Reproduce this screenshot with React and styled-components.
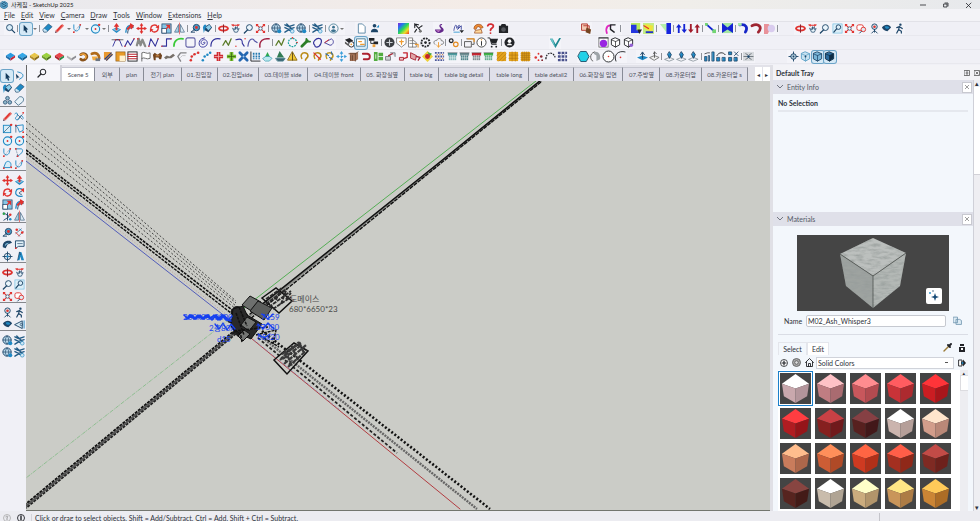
import { useState } from "react";
import styled, { createGlobalStyle } from "styled-components";

const navy = "#1d4568";
const blue = "#2089c4";
const red = "#e0322f";
const ink = "#222428";

// stroke helper, most tool glyphs are plain outlines
const S = ({ d, c = navy, w = 1, f = "none", dash }) => (
  <path d={d} stroke={c} strokeWidth={w} fill={f} strokeDasharray={dash} strokeLinecap={dash ? "butt" : "round"} strokeLinejoin="round" />
);
const F = ({ d, c = navy }) => <path d={d} fill={c} />;
const Dot = ({ x, y, r = 1, c = red }) => <circle cx={x} cy={y} r={r} fill={c} />;

const gem = (top, left, right) => (
  <>
    <F d="M6 2L11 5L6 8L1 5Z" c={top} />
    <F d="M1 5L6 8V10.5L1 7Z" c={left} />
    <F d="M11 5L6 8V10.5L11 7Z" c={right} />
  </>
);
const curve = (d, c = "#33339b") => (
  <>
    <S d={d} c={c} w={1.2} />
    <Dot x={1} y={10} r={0.8} />
    <Dot x={11} y={2} r={0.8} />
  </>
);
const hook = (c, extra) => (
  <>
    <S d="M3 8C1 5 3 2 6 2C10 2 11 6 8 8L7 10" c={c} w={1.7} />
    {extra}
  </>
);
const shelf = (top, body) => (
  <>
    <rect x="1" y="2" width="10" height="3" fill={top} />
    <rect x="2" y="5" width="8" height="5" fill={body} />
    <S d="M4 5V10M6 5V10M8 5V10M2 7.5H10" c="#fff" w={0.5} />
    <S d="M1 2H11" c={ink} w={0.5} />
  </>
);
const tiles = (lines) => (
  <>
    <rect x="1" y="1" width="10" height="10" fill="#e3a21c" />
    <S d={lines} c="#a8700f" w={0.6} />
  </>
);
const globe = (
  <>
    <circle cx="5.5" cy="5.5" r="4.5" fill="#b9d7ea" stroke={navy} />
    <S d="M1 5.5H10M5.5 1C3 4 3 7 5.5 10C8 7 8 4 5.5 1" w={0.7} />
    <circle cx="9" cy="9" r="2.2" fill={blue} />
  </>
);
const house = (
  <>
    <S d="M1 2L5 4L11 2M1 5L5 7L11 5M1 10L5 7.5L8 9M3 1L9 7" c="#245c86" w={1.5} />
    <circle cx="9" cy="9" r="2" fill="#cfe6f4" stroke={blue} strokeWidth="0.7" />
  </>
);
const cubeLine = (c, fill) => (
  <>
    <S d="M6 1L10.5 3V8.5L6 11L1.5 8.5V3Z" c={c} f={fill} />
    <S d="M1.5 3L6 5L10.5 3M6 5V11" c={c} w={0.8} />
  </>
);
const pair = (l, r, up) => (
  <>
    <F c={l} d={up ? "M3 1L6 5H4V11H2V5H0Z" : "M2 11L-1 7H1V1H3V7H5Z"} />
    <F c={r} d={up ? "M9 11L6 7H8V1H10V7H12Z" : "M9 1L12 5H10V11H8V5H6Z"} />
  </>
);

const glyphs = {
  zoom: <><circle cx="7" cy="5" r="3.2" fill="#eaf4fb" stroke={navy} /><S d="M5 7.5L1.5 11" w={1.5} /></>,
  zoomGlass: <><circle cx="5" cy="5" r="3.3" fill="#d8ecf8" stroke={navy} /><S d="M7.5 7.5L10.5 10.5" w={1.4} /></>,
  zoomWindow: <><rect x="1" y="1" width="10" height="10" fill="#dceef8" stroke="#70bde2" strokeWidth="0.7" /><circle cx="7" cy="4.5" r="2.5" fill="none" stroke={navy} /><S d="M5 6.5L2 10" w={1.3} /></>,
  zoomExtents: <><S d="M2 2L10 10M10 2L2 10" c={red} w={1.2} /><F c={red} d="M1 1H4L1 4ZM11 1V4L8 1ZM1 11V8L4 11ZM11 11H8L11 8Z" /><circle cx="6" cy="6" r="1.8" fill="#fff" stroke={navy} strokeWidth="0.8" /></>,
  select: <F c="#123a5c" d="M4 2L9 7H7L8 10L6.5 10.5L5.5 7.8L4 9Z" />,
  lasso: <><S d="M4 1C9 2 11 4 9 7L6 9" c={blue} /><F c="#123a5c" d="M2 3L6 7H4L3 9Z" /></>,
  eraser: <><F c={blue} d="M7 1L11 4L6 9L2 6Z" /><F c="#c9e6f5" d="M2 6L6 9L5 10H2L1 8Z" /><S d="M2 6L7 1L11 4L5 10H2L1 8Z" w={0.7} /></>,
  pencil: <><F c="#e86b66" d="M9 1L11 3L4 10L1 11L2 8Z" /><F c={red} d="M8 2L9 3L4 9L3 8Z" /><F d="M1 11L2 9L3 10Z" /></>,
  freehand: <><S d="M1 3C4 0 5 5 2 7C0 10 6 11 6 7C7 4 10 5 10 8" c={blue} /><Dot x={10} y={2} /><S d="M4 4L9 9M9 4L4 9" w={0.7} /></>,
  arc: <><S d="M2 2V6C3 10 7 9 8 6L9 2" c={blue} /><S d="M2 10L9 2" w={0.6} dash="1 1" /><Dot x={2} y={10} /><Dot x={9} y={2} /></>,
  arcTwo: <><S d="M2 2H8C11 3 9 8 3 10" c={blue} /><S d="M2 2L4 9" w={0.7} dash="1 1" /><Dot x={2} y={2} /><Dot x={4} y={10} /></>,
  pie: <><S d="M2 9L4 4C7 0 12 5 9 9Z" c={blue} f="#d7edf8" /><Dot x={2} y={10} /><Dot x={10} y={9} /></>,
  rectangle: <><rect x="1.5" y="2.5" width="8" height="8" fill="#d7edf8" stroke={blue} /><S d="M2 10L9 3" w={0.7} /><Dot x={10} y={2} r={1.3} /></>,
  rotRect: <><S d="M2 3L10 2V8L6 10L4 5Z" c={blue} /><Dot x={2} y={2.5} /><S d="M2 3V10" w={0.7} /><Dot x={10} y={10} /></>,
  circle: <><circle cx="6" cy="6.5" r="4.5" fill="#e6f4fb" stroke={blue} strokeWidth="1.2" /><Dot x={6} y={6.5} /><Dot x={10} y={2} r={1.3} /></>,
  pushpull: <><F c={blue} d="M1 7L6 5L11 7L6 11Z" /><F c="#8bc9e8" d="M2 7L6 6L10 7L6 9Z" /><F c={red} d="M6 0L9 4H7V8H5V4H3Z" /></>,
  follow: <><S d="M2 10C2 4 5 2 10 3" c={blue} w={1.5} /><S d="M4 11C4 7 6 5 10 5" /><F c={red} d="M7 0L11 3L8 7L7 5L4 8L3 6L6 3Z" /></>,
  move: <><S d="M6 2V10M2 6H10" c={red} w={1.5} /><F c={red} d="M6 0L8 3H4ZM6 12L4 9H8ZM0 6L3 4V8ZM12 6L9 8V4Z" /></>,
  rotate: <><S d="M2 6C2 2 8 1 9 4M10 6C10 10 4 11 3 8" c={red} w={1.4} /><F c={red} d="M11 2V6L7 5ZM1 10V6L5 7Z" /></>,
  scale: <><rect x="1" y="1" width="10" height="10" fill="#86c5e5" stroke={navy} strokeWidth="0.8" /><rect x="1" y="6" width="5" height="5" fill="#fff" stroke={navy} strokeWidth="0.8" /><F c={red} d="M5 2H10V7L8 5L6 7L5 6L7 4Z" /></>,
  flip: <><F c="#a5cfe6" d="M5 2V10H1Z" /><S d="M5 2V10H1Z" w={0.6} /><S d="M7 2V10H11Z" c={navy} f="#dbeaf4" w={0.6} /><S d="M6 0V12" c={red} w={0.7} /></>,
  offset: <><S d="M9 10C4 11 1 8 2 5C3 1 7 1 10 3" c={blue} w={1.3} /><S d="M8 8C5 8 5 5 8 5" /><F c={red} d="M11 1V6L7 3Z" /></>,
  tape: <><circle cx="7" cy="5" r="3.5" fill="#4a9cc8" stroke={navy} /><Dot x={7} y={5} r={1.6} /><S d="M5 7L1 10H5" /></>,
  dimension: <><S d="M2 7L8 2M5 10L10 5" w={0.7} /><Dot x={3} y={3} r={1.4} /><Dot x={9} y={6} r={1.4} /><S d="M2 6L6 10" c={red} /><S d="M6 2L8 4" c={blue} /></>,
  protractor: <><F d="M1 9C0 4 4 1 9 2L11 4L6 6L4 10Z" /><F c="#8ac5e3" d="M3 8C3 5 5 4 8 4L5 6Z" /></>,
  text: <><S d="M2 2H11V8H5L2 10Z" f="#e4f2fa" /><S d="M4 5H9" w={0.7} /><Dot x={2} y={10} /></>,
  axes: <><circle cx="6" cy="6" r="3.5" fill="none" stroke={navy} /><S d="M6 1V11M1 6H11" /><Dot x={6} y={6} c={blue} r={1.3} /></>,
  text3d: <><F c={blue} d="M4 10L6 1H8L11 10H8L7 6L6 10Z" /><S d="M4 10L6 1L7 4" w={0.8} /></>,
  paint: <><F c={navy} d="M3 4L8 1L11 5L7 10L3 8Z" /><F c="#8bcdea" d="M4 4.5L8 2L10 5L7 8Z" /><F c={blue} d="M1 5C2 0 6 1 4 5L2 11Z" /></>,
  softEraser: <S d="M1 7L6 2C10 1 12 5 9 8L5 11Z" c="#3c6685" f="#e7f2f8" w={0.9} />,
  blobs: <><circle cx="6" cy="3.5" r="2" fill="#8fb6cb" stroke={navy} strokeWidth="0.8" /><circle cx="3.5" cy="8" r="2" fill="#8fb6cb" stroke={navy} strokeWidth="0.8" /><circle cx="8.5" cy="8" r="2" fill="#8fb6cb" stroke={navy} strokeWidth="0.8" /></>,
  outliner: <><S d="M2 2L8 6L2 10M6 2V10" c={navy} /><Dot x={2} y={3} c="#2ba24a" r={1.4} /><Dot x={9} y={4} r={1.4} /><Dot x={9} y={9} c={blue} r={1.4} /></>,
  orbit: <><S d="M1 6C2 3 10 3 11 6C10 9 2 9 1 6" c={red} w={1.8} /><S d="M6 2V10" c="#8d2530" w={1.1} /></>,
  pan: <><F c={red} d="M1 2L4 1V4ZM11 2L8 1V4ZM4 2H8V3H4Z" /><S d="M3 6L5 10H8L10 6L8 7V4L6 7V4L5 7Z" f="#e7f3fa" w={0.8} /></>,
  previous: <><rect x="1" y="2" width="7" height="6" rx="2" fill="#fff" stroke={red} /><circle cx="8" cy="7" r="2.5" fill="#e0e9f0" stroke={red} /><S d="M6 9L4 11" w={1} /></>,
  camera: <><circle cx="6" cy="4" r="3" fill="#d9e5ed" stroke={navy} /><Dot x={6} y={4} r={1.4} /><S d="M6 7V10M3 11L6 8L9 11" /></>,
  walk: <><Dot x={7} y={1.8} r={1.3} c={navy} /><S d="M6 4L5 7L8 9V11M5 7L3 11M3 5L6 4L9 6" w={1.3} /></>,
  look: <><F d="M1 5C4 1 9 1 11 5L7 9C4 9 2 7 1 5Z" /><F c={blue} d="M4 4C6 3 9 4 9 5C8 7 5 7 4 4Z" /></>,
  section: <><S d="M1 6L9 2V10Z" f="#d8ebf5" /><S d="M11 2V10" c={blue} /><circle cx="8" cy="6" r="1.3" fill="none" stroke={navy} strokeWidth="0.7" /></>,
  globe, house,
  userRing: <><circle cx="6" cy="6" r="5" fill="none" stroke="#53879d" /><Dot x={6} y={4.5} r={1.5} c="#39708e" /><F c="#39708e" d="M3 9C4 6 8 6 9 9L6 10Z" /></>,
  doc: <S d="M3 1H7L10 4V11H3Z" c="#5a86a4" f="#fff" />,
  person: <><Dot x={6} y={3} r={2} c={navy} /><F d="M2 10C2 5 10 5 10 10Z" /><F c={blue} d="M8 5L11 2V5Z" /></>,
  spectrum: <><defs><linearGradient id="hue" x1="0" y1="0" x2="1" y2="1"><stop offset="0" stopColor="#8a25d8" /><stop offset="0.25" stopColor="#2673f2" /><stop offset="0.5" stopColor="#28d95c" /><stop offset="0.75" stopColor="#ecdf28" /><stop offset="1" stopColor="#f03424" /></linearGradient></defs><rect width="12" height="12" fill="url(#hue)" /></>,
  wand: <><S d="M3 1L10 9M3 1V5M3 1L7 2M8 5L11 3M5 7L3 10" c={ink} w={1.2} /><Dot x={9} y={9} r={1.5} c="#777" /></>,
  swan: <><F c="#64298c" d="M1 7H8L6 4C5 1 9 0 9 2L7 3L10 6C12 9 8 11 5 11C3 11 1 9 1 7Z" /><F c="#c278c7" d="M2 8H7L5 10Z" /></>,
  scribble: <><S d="M1 8C2 1 4 1 4 5C3 8 7 0 7 3L5 7L9 3V7" c="#3b459c" /><S d="M1 10H7" c="#3a9ad1" /><F c={ink} d="M7 8H12L9.5 11Z" /></>,
  phone: <><S d="M1 6C1 0 10 0 11 5L8 6L7 4H5L3 7Z" c="#9c4f21" f="#ee8b32" w={0.8} /><S d="M3 8L9 7L10 11H2Z" c="#9c4f21" f="#ffd89b" w={0.8} /></>,
  question: <><S d="M3 3C4 0 10 1 9 4C8 6 6 6 6 8" c="#d42c32" w={2} /><Dot x={6} y={11} c="#d42c32" /></>,
  photo: <><F c={ink} d="M1 3H3L4 1H8L9 3H11V11H1Z" /><circle cx="6" cy="7" r="2.5" fill="#55585e" /></>,
  copies: <><S d="M1 1H7V8H1ZM3 3H9V10" c="#b4382e" f="#f2cbb5" /><F c="#754522" d="M6 5L11 7L10 12L5 10Z" /></>,
  magenta: <><S d="M2 11C0 4 4 2 6 3" c="#df28c0" w={2} /><S d="M6 2H11M6 2V7L10 10" c={ink} w={1.5} /></>,
  fieldA: <><rect width="10" height="11" fill="#b8ea60" /><F c="#2536df" d="M0 2H6V8H10V11H0Z" /><F c={ink} d="M7 7H12L9 12Z" /></>,
  fieldB: <><rect width="12" height="12" fill="#c4ec83" /><F c="#f0e33a" d="M3 1L11 3L10 10L1 6Z" /><S d="M1 3L6 6" c={red} w={1.3} /><F c="#2432c9" d="M3 9H11V11H3Z" /></>,
  fieldC: <><F c="#b5efaa" d="M0 1H7V10Z" /><rect x="7" width="5" height="12" fill="#1625de" /></>,
  pairBlue: pair("#1424d4", "#1424d4", true),
  pairRed: pair("#a21c2c", "#a21c2c", false),
  diagonal: <><S d="M1 1L10 9" c="#1424d4" w={2} /><rect x="8" y="7" width="4" height="4" fill="#73d673" /><rect width="3" height="3" fill="#73d673" /></>,
  bow: <><rect width="12" height="11" fill="#a4e6a4" /><F c="#1424d4" d="M0 0L6 5L12 0V11L6 7L0 11Z" /></>,
  bendBlue: <><S d="M2 2C9 1 11 5 8 10" c="#1626c7" w={3} /><rect width="4" height="3" fill="#a6eba8" /></>,
  bendRed: <S d="M1 3C8 0 13 4 8 10" c="#9e2431" w={3} />,
  pinkBall: <><F c="#e9929a" d="M0 1H5L8 4L4 12H0Z" /><circle cx="8" cy="6" r="4" fill="#d9ccee" /></>,
  bez: <><S d="M1 10L4 3H8L11 10" c="#33339b" /><S d="M0 3H12" c={ink} w={0.7} /><Dot x={4} y={3} r={0.9} /><Dot x={8} y={3} r={0.9} /></>,
  zig: curve("M1 10L4 4L7 9L11 2"),
  zigGrey: <><S d="M1 9L3 2L5 9L7 3L10 10" c="#888b88" w={2.5} /><Dot x={2} y={2} /></>,
  ess: curve("M1 10L3 2L8 10L11 2"),
  steps: curve("M1 10H6V2H11"),
  greenArc: <S d="M1 10C1 4 5 1 11 2" c="#38c935" w={1.8} />,
  rrect: <rect x="1" y="1" width="10" height="10" rx="2" fill="none" stroke="#6260a6" strokeWidth="1.2" />,
  spiral: <S d="M6 6C7 4 9 7 6 8C3 9 2 4 6 3C11 2 12 10 6 11C0 12 0 4 4 2L7 1" c="#33339b" />,
  quarter: <S d="M1 10C1 3 6 1 11 2" c="#33339b" w={1.3} />,
  olive: <S d="M1 9L4 4L7 9L10 2" c="#5a7b28" w={1.4} />,
  drop: curve("M1 3C8 1 8 4 8 7L10 10"),
  hump: <S d="M1 10C2 1 7 1 8 4L11 6" c="#5354a5" w={1.3} />,
  redArc: <S d="M1 11C0 4 5 1 11 2" c="#a02242" w={1.6} />,
  ring: <><circle cx="6" cy="6" r="4.5" fill="none" stroke="#1aa39f" strokeWidth="1.3" strokeDasharray="2 1" /><Dot x={6} y={1} r={0.9} /><Dot x={11} y={6} r={0.9} /></>,
  wrench: <><S d="M2 10L8 4" c="#2b7d27" w={3} /><S d="M7 2V5H11" c="#2b7d27" w={2} /></>,
  oval: <S d="M3 9C-1 6 5 0 9 2C12 4 9 11 5 11C4 11 3 10 3 9Z" c="#33339b" w={1.3} />,
  kite: <><S d="M1 6L8 2C12 4 10 9 7 9Z" c="#44409b" /><S d="M1 6L5 3" c={red} /></>,
  boxes: <><F c={ink} d="M1 3L6 1L10 4L6 7Z" /><F c="#555" d="M1 5L5 8V10L1 7Z" /><circle cx="8" cy="8" r="3" fill="#fff" stroke={ink} /><Dot x={8} y={8} c="#f0a13b" /></>,
  frame: <><S d="M1 2H10V10H1Z" c="#4d7c92" f="#fff" /><S d="M3 5H6M5 8H9" c="#ef9c32" w={1.3} /></>,
  flow: <><F c={ink} d="M1 1H7V4H1ZM6 5H11V8H6Z" /><F c="#f0a13b" d="M5 8H8V11H5Z" /><S d="M3 4V7H6" c={ink} /></>,
  plusDisc: <><circle cx="6" cy="6" r="5.5" fill="#3b3e43" /><S d="M3 6H9M6 3V9" c="#cfd3d8" w={1.2} /></>,
  shield: <><S d="M1 1H11V7L6 11L1 7Z" c="#666" f="#fff" w={0.8} /><S d="M6 3V8M4 5H8" c="#ef9c32" w={1.3} /></>,
  layers: <><S d="M1 1H5V11H1ZM5 3L9 6V11H5M2 4H5M2 7H9" c="#666" f="#fff" w={0.8} /><S d="M8 8H11V11" c="#ef9c32" w={1.3} /></>,
  blackGear: <><circle cx="6" cy="6" r="4.5" fill="none" stroke={ink} strokeWidth="2" strokeDasharray="2 1" /><circle cx="6" cy="6" r="1.5" fill={ink} /></>,
  cloud: <><S d="M2 8C-1 5 3 3 4 4C5 0 10 2 9 4C13 4 12 9 9 8" c="#777" /><S d="M6 6V11M4 9L6 11L8 9" c="#ef9c32" /></>,
  gears: <><circle cx="3.5" cy="4" r="2" fill="none" stroke={ink} strokeWidth="1.4" /><circle cx="8.5" cy="8" r="2.5" fill="none" stroke="#e48c22" strokeWidth="1.3" /></>,
  folder: <><S d="M3 2H11V8H9M1 5H8V11H1Z" c="#444" w={0.9} /><S d="M4 2H11V5" c="#ef9c32" w={1.4} /></>,
  info: <><circle cx="6" cy="6" r="5" fill="#fff" stroke="#444" /><S d="M6 5V9" c={ink} /><Dot x={6} y={3} r={0.7} c="#ef9c32" /></>,
  cart: <><F c={ink} d="M2 2H11L9 7H4Z" /><S d="M0 1H2L4 8H9" c={ink} /><Dot x={4} y={10.5} c={ink} /><Dot x={9} y={10.5} c={ink} /></>,
  account: <><circle cx="6" cy="6" r="5.5" fill={ink} /><Dot x={6} y={4.5} r={2} c="#fff" /><F c="#fff" d="M3 9C4 6.5 8 6.5 9 9Z" /></>,
  check: <><F c="#1e8790" d="M0 2L3 2L6 8L10 1H12L6 12Z" /><F c="#69c3c8" d="M0 2L3 2L6 12Z" /></>,
  purpleBall: <><rect x="1" y="1" width="10" height="10" fill="#fff" stroke="#444" strokeWidth="0.7" /><circle cx="6" cy="7" r="4" fill="#9926e2" /><S d="M1 1H11" c={ink} /></>,
  cubeInk: cubeLine(ink, "#fff"),
  cubeInk2: <>{cubeLine(ink, "#fff")}<Dot x={9} y={9} r={2} c="#9360d3" /></>,
  gemMix: gem("#2b9be0", "#1b6cab", "#c92434"),
  gemBlue: gem("#35a7e6", "#1976ae", "#135b8b"),
  gemYellow: gem("#e8c64a", "#b58e24", "#8b6c18"),
  gemGreen: gem("#9cd23f", "#6d9b26", "#4e761a"),
  gemRed: gem("#e9454a", "#b01f2b", "#2a8a48"),
  gemWhite: gem("#f3f3f3", "#b5b5b8", "#8c8c90"),
  swirl: <><S d="M3 4C7 1 11 5 9 8C7 11 4 10 3 9" c="#8a541c" w={3} /><S d="M3 4C7 2 10 5 8 8" c="#efa23a" w={1.6} /></>,
  swirlBox: <><S d="M2 3C7 1 10 4 10 8" c="#b06a1b" w={3} /><F c="#f2ac43" d="M2 6H8V10H3Z" /><F c="#6c7582" d="M6 8H11V11H6Z" /></>,
  swirlPen: <><F c="#e9982f" d="M1 1H8L11 4L4 11L1 8Z" /><S d="M2 9L9 2M4 10L10 4" c="#223d8b" w={1.2} /></>,
  corner: <><rect x="1" y="1" width="10" height="10" fill="#e89b26" stroke="#8b5c1c" strokeWidth="0.7" /><rect x="5" y="5" width="6" height="6" fill="#fff1cf" /></>,
  stripes: <><rect x="1" y="1" width="10" height="10" fill="#fff" stroke={ink} /><S d="M1 3.5H11M1 6H11M1 8.5H11" c="#bd2733" w={1.1} /></>,
  flag: <S d="M2 11V2C5 0 7 4 11 2V8C7 10 5 6 2 8" c="#646464" f="#fff" />,
  bear: <><F c="#71441f" d="M1 4L3 2L6 4L9 2L11 5L10 9H8L7 7H4V10H2Z" /><F c="#b9793e" d="M4 4H8V6H4Z" /></>,
  bearThin: <F c="#77706a" d="M0 7L3 5L6 6L10 3L12 5L8 8L4 8L2 9Z" />,
  elbow: <><S d="M11 2H5L2 6L5 11" c="#848487" w={1.5} /><S d="M10 5H7L5 7" c="#c3c3c7" /></>,
  dotsRed: <><S d="M2 10C3 5 5 3 10 2" c="#999" w={0.6} /><Dot x={2} y={10} r={1.4} /><Dot x={3} y={6} r={1.4} /><Dot x={6} y={3.5} r={1.4} /><Dot x={10} y={2} r={1.4} /></>,
  dotsBlue: <><Dot x={2} y={10} r={1.4} c={blue} /><Dot x={4} y={6} r={1.4} c={blue} /><Dot x={7} y={4} r={1.4} c={blue} /><Dot x={10} y={2} r={1.4} c={blue} /></>,
  crossRed: <><F c="#cf2a30" d="M4 1H8V4H11V8H8V11H4V8H1V4H4Z" /><S d="M6 2V10M2 6H10" c="#f2b9bb" w={0.8} /></>,
  crossGreen: <><F c="#78bd2d" d="M4 1H8V4H11V8H8V11H4V8H1V4H4Z" /><S d="M6 2V10M2 6H10" c="#315f12" w={0.8} /></>,
  crossBlue: <><S d="M2 2L10 10M10 2L2 10" c="#2567b0" w={3} /><Dot x={6} y={6} c="#a9cdf0" /></>,
  dotGrid: <><S d="M1 1V11H11" c={ink} /><S d="M4 2V9M7 2V9M10 2V9" c="#2378b0" w={1.8} dash="2 1" /></>,
  cone: <><F c="#2ca84f" d="M6 1L9 7H3Z" /><S d="M1 8L4 6H8L11 8L8 11H4Z" c="#3c9db2" f="#bce9ee" w={0.8} /></>,
  coneGrey: <><F c="#317b55" d="M5 0L10 7H2Z" /><S d="M1 8H11L9 11H3Z" c="#4a818e" f="#3b6470" /></>,
  warn: <><S d="M6 1L11 10H1Z" c="#8c6b13" f="#f0c834" /><S d="M6 2V10" c="#5c4817" /></>,
  hookYellow: hook("#ba8a17"),
  hookRed: hook("#ba8a17", <S d="M2 2L9 9" c={red} w={1.3} />),
  hookBlue: hook("#c3981e", <S d="M2 3L5 5M8 1L9 4M9 9L6 7" c="#2a69ac" w={1.2} />),
  moveBlue: <><S d="M6 1V11M1 6H11" c="#3c9fda" w={1.3} dash="3 1" /><F c="#3c9fda" d="M6 0L8 3H4ZM6 12L4 9H8ZM0 6L3 4V8ZM12 6L9 8V4Z" /></>,
  crate: <><F c="#a9765b" d="M2 2H11V9L8 11H2Z" /><S d="M1 3H8V11M8 3L11 1M3 5V10M5 5V10" c="#60402d" w={0.9} /></>,
  magnet: <S d="M2 3H7C11 4 10 9 7 9H3" c="#ab1f2f" w={2} />,
  blocksGreen: <><F c="#52ac40" d="M1 1H5V11H1ZM6 2H11V10H6Z" /><S d="M6 6H11M3 4V8" c="#fff" w={0.8} /></>,
  linkA: <><S d="M1 6H6V10H1ZM6 2H11V6" c="#7c7d83" f="#cfd0d5" /><S d="M4 5L8 3" c="#a82635" w={1.5} /></>,
  linkB: <><S d="M2 7H6V10H2Z" c="#a82635" f="#f1c1c3" /><S d="M6 2H10V7L7 8" c="#c4232f" w={1.5} /></>,
  linkC: <><S d="M1 2L7 5L6 10L1 8Z" c="#a82635" f="#e0a5a8" /><S d="M7 6L11 7L9 10" c="#a82635" w={1.5} /></>,
  target: <><F c="#eed036" d="M6 0L12 6L6 12L0 6Z" /><F c="#4aa744" d="M6 1L11 3L8 6Z" /><Dot x={6} y={6} r={2.7} c="#c4252c" /></>,
  mosaic: <><S d="M1 2H11M1 6H11M1 10H11" c="#4c5898" w={2} dash="2 1" /><S d="M3 4H10M3 8H10" c="#c2702e" w={1.3} dash="1 2" /></>,
  shelfTeal: shelf("#4f9ca0", "#81b7ba"),
  shelfDots: shelf("#6f8f94", "#4d8289"),
  shelfRed: shelf("#ca2633", "#7d8b91"),
  shelfGreen: shelf("#41b54b", "#64aa8d"),
  tileHatch: tiles("M1 5L5 1M1 9L9 1M3 11L11 3M7 11L11 7"),
  tileFour: tiles("M4.5 1V11M8 1V11M1 4.5H11M1 8H11"),
  tileGrid: tiles("M3 1V11M5 1V11M7 1V11M9 1V11M1 3H11M1 5H11M1 7H11M1 9H11"),
  scatter: <><Dot x={6} y={3} /><Dot x={3} y={7} r={1.4} /><Dot x={9} y={6} r={1.4} c="#842730" /><Dot x={6} y={10} /><Dot x={10} y={10} c="#842730" /></>,
  dotArc: <S d="M1 9C1 1 9 0 11 7" c={ink} w={1.4} dash="2 1" />,
  mosaicBlue: <><S d="M1 2H11M1 6H11M1 10H11" c="#49518c" w={2.5} dash="3 1" /><S d="M2 4H9M3 8H11" c="#9295b8" dash="1 2" /></>,
  hexagon: <S d="M3 0.5H9L12 6L9 11.5H3L0 6Z" c="#1b4e67" f="#22d1e8" />,
  halfGrey: <><S d="M5 1C-2 3 1 11 3 11" c="#555" /><F c="#9ea4a8" d="M5 1C9 0 12 4 11 9L7 11V5L4 3Z" /></>,
  bigCircle: <><circle cx="6" cy="6" r="6" fill="#fff" stroke={ink} /><Dot x={6} y={6} r={0.9} /></>,
  bigArc: <><S d="M1 11C-2 4 4 -1 11 1" c={ink} /><Dot x={6} y={7} r={0.9} /></>,
  plateUp: <><F c={blue} d="M0 7L6 5L12 7L6 10Z" /><S d="M6 2V8M4 4L6 1L8 4" c={navy} /></>,
  plateGrey: <><S d="M1 7L6 5L11 7L6 10Z" c="#777" f="#eee" /><S d="M6 1V7M5 3L6 1L8 3" c="#555" /></>,
  pinBlue: <><S d="M1 9L6 7L11 9L6 11Z" c="#7e8b92" w={0.8} /><S d="M6 1L8 4L6 8L4 4Z" c={navy} f={blue} /></>,
  barsUp: <><S d="M1 6H3V11H1ZM5 5H6V11H5ZM9 1H11V11H9Z" c={navy} f={blue} w={0.8} /><S d="M1 3L4 2H6" c={ink} w={0.8} /></>,
  arcBars: <><S d="M1 5C3 1 8 1 10 4" c={ink} /><S d="M1 7H4V11H1ZM7 7H10V11H7Z" c={navy} f={blue} w={0.8} /></>,
  fourBars: <S d="M1 1H4V4H1ZM1 7H4V11H1ZM7 7H10V11H7ZM7 1L11 5M11 1L7 5" c={navy} f={blue} w={0.9} />,
  burst: <><rect x="0" y="1" width="12" height="10" fill="#d6d9dd" /><S d="M1 6H4M11 6H8M3 3L5 4M9 3L7 4M3 9L5 8M9 9L7 8" c="#4f5961" w={0.8} /><Dot x={6} y={6} c={navy} r={1.5} /></>,
  compass: <><circle cx="6" cy="6" r="3" fill="#b6cfdd" stroke={navy} /><S d="M6 1V3M6 9V11M1 6H3M9 6H11" /><Dot x={6} y={6} c={navy} /></>,
  cubeSky: <>{cubeLine("#5aa0c6", "#c8e2f0")}<Dot x={6} y={6} c={navy} /></>,
  cubeNavy: cubeLine(navy, "#79b5d7"),
  cubeDark: <>{cubeLine("#0d2c45", "#2c6c9d")}<F c="#0d2c45" d="M6 5L10 3V8L6 11Z" /></>,
};

const split = (s) => s.trim().split(/\s+/);

// "|" is a separator, "v" a drop-down arrow, a leading "*" marks a pressed tool
const toolbarRows = [
  [
    { gap: 4, width: 341, tools: split("zoomGlass | *select v | eraser pencil v arc v circle v | pushpull follow move rotate scale flip | tape paint | orbit pan zoom zoomExtents | globe house globe | house | userRing v") },
    { gap: 10, width: 25, tools: ["doc", "person"] },
    { gap: 17, width: 26, tools: ["spectrum", "wand"] },
    { gap: 10, width: 12, tools: ["swan"] },
    { gap: 7, width: 12, tools: ["scribble"] },
    { gap: 8, width: 37, tools: ["phone", "question", "photo"] },
    { gap: 71, width: 12, tools: ["copies"] },
    { gap: 12, width: 18, tools: ["magenta", "|"] },
    { gap: 8, width: 149, tools: split("fieldA fieldB | fieldC | pairBlue pairRed | diagonal | bow | bendBlue bendRed pinkBall |") },
    { gap: 15, width: 111, tools: split("orbit pan zoom zoomWindow zoomExtents previous camera look walk") },
  ],
  [
    { gap: 111, width: 225, tools: split("bez zig zigGrey ess steps greenArc rrect spiral quarter olive drop hump redArc | olive ring wrench oval kite") },
    { gap: 7, width: 172, tools: split("boxes *frame flow | plusDisc shield layers blackGear cloud | gears | folder info cart | account") },
    { gap: 34, width: 12, tools: ["check"] },
    { gap: 36, width: 37, tools: ["purpleBall", "cubeInk", "cubeInk2"] },
  ],
  [
    { gap: 4, width: 565, tools: split("gemMix gemBlue gemYellow gemGreen gemRed gemWhite swirl swirlBox swirlPen corner stripes flag bear bearThin elbow dotsRed dotsBlue crossRed crossGreen crossBlue dotGrid cone coneGrey warn hookYellow hookRed hookBlue moveBlue crate magnet blocksGreen linkA linkB linkC target mosaic shelfTeal shelfDots shelfRed shelfGreen tileHatch tileFour tileGrid scatter dotArc mosaicBlue") },
    { gap: 8, width: 50, tools: split("hexagon halfGrey bigCircle bigArc") },
    { gap: 9, width: 119, tools: split("plateUp plateGrey | pinBlue pinBlue pinBlue | barsUp arcBars fourBars | burst") },
    { gap: 32, width: 49, tools: split("compass cubeSky *cubeNavy *cubeDark") },
  ],
];

const railGroups = [
  ["*select", "lasso", "paint", "eraser", "blobs", "softEraser"],
  ["pencil", "freehand", "rectangle", "rotRect", "circle", "circle", "arc", "arcTwo", "pie", "arc"],
  ["move", "pushpull", "rotate", "offset", "scale", "follow", "outliner", "flip"],
  ["tape", "dimension", "protractor", "text", "axes", "text3d"],
  ["orbit", "pan", "zoom", "zoomWindow", "zoomExtents", "previous"],
  ["camera", "walk", "look", "section"],
  ["globe", "house", "globe", "house"],
];

const scenes = [
  ["Scene 5", 33], ["외부", 25], ["plan", 23], ["전기 plan", 38], ["01.진입장", 36], ["02.진입side", 41],
  ["03.테이블 side", 50], ["04.테이블 front", 53], ["05. 화장실옆", 44], ["table big", 34], ["table big detail", 52],
  ["table long", 39], ["table detail2", 45], ["06.화장실 입면", 50], ["07.주방옆", 37], ["08.카운터앞", 42], ["08.카운터앞 s", 46],
];

// top, left and right face of each swatch cube
const swatches = [
  ["#ffffff", "#c9a8ad", "#b3959b"], ["#ffc2c6", "#c07d82", "#a96b70"], ["#ff8c8f", "#c8575c", "#b24b50"], ["#ff5c60", "#c93338", "#ad2a2f"], ["#ff3439", "#cb1d22", "#a9161b"],
  ["#ff3d41", "#b01c21", "#951519"], ["#c94145", "#86201f", "#701a1c"], ["#864044", "#57201f", "#421819"], ["#ffffff", "#cbb4ae", "#b59f99"], ["#ffe5cc", "#d29d8b", "#b98878"],
  ["#ffbd8d", "#c97c5c", "#ad674b"], ["#ff8f5a", "#cd5d35", "#b04a27"], ["#ff6543", "#cf3a21", "#b13019"], ["#ff5e48", "#a42f20", "#8f2819"], ["#c24b47", "#7f2a23", "#6d211c"],
  ["#884541", "#57241f", "#431b17"], ["#ffffff", "#c9bcac", "#b0a494"], ["#ffffc8", "#cbac7e", "#b2956b"], ["#ffe786", "#c9955a", "#ad7c45"], ["#ffca59", "#cb8535", "#ad6d26"],
];

const Icon = ({ name }) => (
  <svg width="12" height="12" viewBox="0 0 12 12" overflow="visible" aria-hidden="true">
    {glyphs[name]}
  </svg>
);

const Tool = ({ tool }) => {
  if (tool === "|") return <Separator />;
  if (tool === "v") return <Caret aria-label="More" />;
  const pressed = tool[0] === "*";
  const name = pressed ? tool.slice(1) : tool;
  return (
    <ToolButton aria-label={name} $pressed={pressed}>
      <Icon name={name} />
    </ToolButton>
  );
};

const Scene = () => (
  <Drawing viewBox="26 81 744 429" preserveAspectRatio="xMidYMid slice" role="img" aria-label="Model view">
    <S d="M536 81L240 311" c="#55ae55" w={1} />
    <S d="M240 311L26 478" c="#7fba83" w={0.8} dash="4 1 1 1" />
    <S d="M26 161L240 328" c="#4550b8" w={0.9} />
    <S d="M235 325L460 509" c="#b23c40" w={1} />
    <S d="M26 157L236 322" c="#b98b8b" w={0.7} dash="1 2" />

    <S d="M26 121L236 301" c="#333" w={0.9} dash="2 2" />
    <S d="M26 128L236 303" c="#333" w={0.9} dash="2 2" />
    <S d="M26 134L236 306" c="#333" w={0.9} dash="2 2" />
    <S d="M26 141L236 309" c="#333" w={0.9} dash="2 2" />
    <S d="M26 150L236 313" c="#111" w={1.6} dash="3 1" />
    <S d="M26 153L236 317" c="#111" w={1.4} dash="3 1" />

    <S d="M541 81L250 316" c="#8c8d8a" w={2} />
    <S d="M541 80L440 162L250 314" c="#111" w={1.5} />
    <S d="M541 82L440 164L250 319" c="#111" w={1.4} dash="4 1" />
    <S d="M245 322L26 504" c="#111" w={2} dash="3 1" />
    <S d="M245 326L26 508" c="#222" w={2} dash="3 1" />
    <S d="M245 324L26 506" c="#555" w={2} />

    <S d="M262 331L325 380L490 509" c="#111" w={2.6} dash="2 2" />
    <S d="M258 334L477 509" c="#666" w={2.4} dash="2 1" />
    <S d="M258 338L397 453" c="#222" w={1.8} dash="3 2" />
    <S d="M254 340L340 410" c="#8285b6" w={0.8} dash="2 2" />

    {/* furniture around the origin */}
    <S d="M232 312C236 304 243 308 240 314C248 312 250 320 243 323L238 335L232 326L240 320L229 321L246 327L233 333" c="#1b1b1b" w={3} />
    <g stroke="#111" strokeWidth="1">
      <path d="M233 309L243 306L247 315L262 324L251 339L240 334L231 326Z" fill="#292929" />
      <path d="M242 305L250 296L261 302L253 312Z" fill="#6e706e" />
      <path d="M250 311L258 301L272 308L264 320Z" fill="#5c5e5c" />
      <path d="M241 325L247 317L256 322L249 331Z" fill="#747674" />
      <path d="M238 336L244 330L250 334L243 341Z" fill="#747674" />
      <path d="M262 298L276 288L292 301L279 313Z" fill="none" strokeWidth="1.5" />
      <path d="M274 360L294 343L308 351L287 374Z" fill="none" strokeWidth="1.5" />
    </g>
    <S d="M266 304L286 289M269 307L291 291M273 309L291 297M266 299L282 288M276 300L281 288M281 304L287 288M286 299L291 293" c="#2b2b2b" w={1.8} dash="4 1" />
    <S d="M280 360L299 342M284 364L306 345M282 354L301 343M288 367L307 350M285 350L292 366M291 345L298 360M299 342L304 353M283 359L300 346" c="#3a3a3a" w={2.2} dash="5 1" />
    <S d="M236 313L244 335M239 307L247 326M234 331L268 327M242 342L240 331M256 335L276 330L273 344M264 338L279 347" c="#111" w={1.5} dash="3 1" />

    {/* dimension strings piled on top of each other */}
    <S d="M184 315L188 319L192 315L196 319L200 315L204 319L208 315L212 320L216 315L220 320L224 315L228 320L232 316M186 319L190 315L194 319L198 315L202 319L206 315L210 319L214 315L218 320L222 315L226 320L231 321" c="#1540f0" w={1.6} />
    <S d="M215 324L219 329L223 323L227 330L231 324L235 329M258 324L263 329L268 323L274 329M258 334L264 338L270 334M262 314L268 319L273 314" c="#1540f0" w={1.3} />
    <CanvasText x="290" y="302">도메이스</CanvasText>
    <CanvasText x="289" y="312">680*6650*23</CanvasText>
    <CanvasText x="183" y="320" $blue>200x00x0000</CanvasText>
    <CanvasText x="209" y="331" $blue>2층80x</CanvasText>
    <CanvasText x="217" y="342" $blue>d15</CanvasText>
    <CanvasText x="261" y="320" $blue>7159</CanvasText>
    <CanvasText x="256" y="330" $blue>17080</CanvasText>
    <CanvasText x="257" y="340" $blue>65x20</CanvasText>
  </Drawing>
);

const PanelHeader = ({ title }) => (
  <Header>
    <svg width="6" height="4" viewBox="0 0 6 4" aria-hidden="true"><S d="M0 0L3 3L6 0" c="#555b66" w={0.8} /></svg>
    <h2>{title}</h2>
    <CloseButton aria-label={`Close ${title}`}>
      <svg width="4" height="4" viewBox="0 0 5 5" aria-hidden="true"><S d="M0 0L5 5M5 0L0 5" c="#666" w={0.8} /></svg>
    </CloseButton>
  </Header>
);

const App = () => {
  const [scene, setScene] = useState(0);
  const [picked, setPicked] = useState(0);
  const [materialName, setMaterialName] = useState("M02_Ash_Whisper3");

  return (
    <Window>
      <GlobalStyle />
      <TitleBar>
        <svg width="8" height="8" viewBox="0 0 12 12" aria-hidden="true">
          <S d="M6 0L11 3V9L6 12L1 9V3Z" c="#24668f" f="#5faad2" />
          <S d="M3 4L9 7M3 7L6 9L9 7M3 4L6 2L9 4" c="#153f5e" />
        </svg>
        <h1>사케집 - SketchUp 2025</h1>
        <WindowButtons>
          <button aria-label="Minimize"><svg width="6" height="6" viewBox="0 0 6 6"><S d="M0 3H6" c={ink} w={0.8} /></svg></button>
          <button aria-label="Restore"><svg width="6" height="6" viewBox="0 0 6 6"><S d="M1 2H4V5H1ZM2 1H5V4" c={ink} w={0.8} /></svg></button>
          <button aria-label="Close"><svg width="6" height="6" viewBox="0 0 6 6"><S d="M0 1L5 6M5 1L0 6" c={ink} w={0.8} /></svg></button>
        </WindowButtons>
      </TitleBar>

      <MenuBar>
        {["File", "Edit", "View", "Camera", "Draw", "Tools", "Window", "Extensions", "Help"].map((item) => (
          <button key={item}><u>{item[0]}</u>{item.slice(1)}</button>
        ))}
      </MenuBar>

      <Toolbars>
        {toolbarRows.map((row, r) => (
          <ToolbarRow key={r}>
            {row.map((bar, i) => (
              <Toolbar key={i} $gap={bar.gap} $width={bar.width}>
                {bar.tools.map((tool, t) => <Tool key={t} tool={tool} />)}
              </Toolbar>
            ))}
          </ToolbarRow>
        ))}
      </Toolbars>

      <Workspace>
        <Rail>
          {railGroups.map((group, g) => (
            <RailGroup key={g} $divided={g > 0}>
              {group.map((tool, t) => <Tool key={t} tool={tool} />)}
            </RailGroup>
          ))}
        </Rail>

        <Viewport>
          <SceneBar>
            <SearchButton aria-label="Search scenes">
              <svg width="10" height="10" viewBox="0 0 10 10"><circle cx="6" cy="4" r="2.8" fill="none" stroke={ink} /><S d="M4 6L1 9" c={ink} w={1.3} /></svg>
            </SearchButton>
            {scenes.map(([label, size], i) => (
              <SceneTab key={label} $size={size} $active={i === scene} onClick={() => setScene(i)}>{label}</SceneTab>
            ))}
            <SceneScroll>
              <button aria-label="Previous scenes">◂</button>
              <button aria-label="Next scenes">▸</button>
            </SceneScroll>
          </SceneBar>
          <Scene />
        </Viewport>

        <Tray>
          <TrayTitle>
            <h2>Default Tray</h2>
            <button aria-label="Pin tray"><svg width="6" height="6" viewBox="0 0 6 6"><S d="M0.5 0.5H5.5V5.5H0.5ZM3 1V5M2 3H4" c="#444" w={0.7} /></svg></button>
            <button aria-label="Close tray"><svg width="6" height="6" viewBox="0 0 6 6"><S d="M0.5 0.5H5.5V5.5H0.5ZM2 2L4 4M4 2L2 4" c="#444" w={0.7} /></svg></button>
          </TrayTitle>
          <TrayBody>
            <Panels>
              <PanelHeader title="Entity Info" />
              <EntityInfo>
                <strong>No Selection</strong>
              </EntityInfo>

              <PanelHeader title="Materials" />
              <Materials>
                <Preview>
                  <svg width="68" height="72" viewBox="0 0 68 72" role="img" aria-label={materialName}>
                    <defs>
                      <filter id="grain" x="0" y="0" width="1" height="1">
                        <feTurbulence type="fractalNoise" baseFrequency="0.12 0.4" numOctaves="3" seed="4" />
                        <feColorMatrix values="0 0 0 0 0.3  0 0 0 0 0.33  0 0 0 0 0.32  1.6 0 0 0 -0.6" />
                        <feComposite in2="SourceAlpha" operator="in" result="noise" />
                        <feMerge><feMergeNode in="SourceGraphic" /><feMergeNode in="noise" /></feMerge>
                      </filter>
                    </defs>
                    <g filter="url(#grain)">
                      <path d="M34 1L67 16L34 39L1 17Z" fill="#bcc0be" />
                      <path d="M1 17L34 39V71L7 49Z" fill="#9ea3a0" />
                      <path d="M67 16L34 39V71L61 49Z" fill="#b3b8b5" />
                    </g>
                    <S d="M1 17L34 39L67 16M34 39V71" c="#4c504e" w={0.8} />
                  </svg>
                  <Sparkle aria-label="Generate texture">
                    <svg width="12" height="12" viewBox="0 0 12 12"><F c="#164a76" d="M7 3L8 6L11 7L8 8L7 11L6 8L3 7L6 6Z" /><Dot x={2} y={3} r={0.9} c={blue} /><Dot x={5} y={1} r={0.7} c={navy} /></svg>
                  </Sparkle>
                </Preview>
                <NameRow>
                  <label htmlFor="material-name">Name</label>
                  <input id="material-name" value={materialName} onChange={(e) => setMaterialName(e.target.value)} />
                  <button aria-label="Copy material"><svg width="9" height="9" viewBox="0 0 8 8"><S d="M0.5 1H4V6H0.5ZM3 3H6L7.5 4V7.5H3Z" c="#6c93ad" f="#dcebf4" w={0.7} /></svg></button>
                </NameRow>
                <MaterialTabs>
                  <MaterialTab>Select</MaterialTab>
                  <MaterialTab $raised>Edit</MaterialTab>
                  <button aria-label="Sample paint"><svg width="10" height="10" viewBox="0 0 10 10"><S d="M1 9L6 4" c="#9b7c38" w={1.4} /><S d="M5 3L7 5M6 4L8 2" c={ink} w={2} /></svg></button>
                  <button aria-label="Default material"><svg width="6" height="8" viewBox="0 0 6 8"><F c={ink} d="M1 0H5V2H1ZM0 3H6V8H0Z" /><F c="#fff" d="M2 4H4V6H2Z" /></svg></button>
                </MaterialTabs>
                <LibraryRow>
                  <button aria-label="Create material"><svg width="8" height="8" viewBox="0 0 8 8"><circle cx="4" cy="4" r="3.5" fill="#fff" stroke={ink} strokeWidth="0.8" /><S d="M2 4H6M4 2V6" c={ink} w={1.2} /></svg></button>
                  <button aria-label="Model materials"><svg width="9" height="9" viewBox="0 0 9 9"><circle cx="4.5" cy="4.5" r="4" fill="#aaa" stroke="#555" strokeWidth="0.8" /><circle cx="4.5" cy="4.5" r="1.8" fill="#ddd" stroke="#555" strokeWidth="0.8" /></svg></button>
                  <button aria-label="In model"><svg width="9" height="9" viewBox="0 0 9 9"><S d="M0.5 4.5L4.5 0.5L8.5 4.5M1.5 4V8.5H7.5V4M3.5 8.5V5.5H5.5V8.5" c={ink} w={0.9} /></svg></button>
                  <select aria-label="Material library"><option>Solid Colors</option></select>
                  <button aria-label="Details"><svg width="8" height="8" viewBox="0 0 8 8"><S d="M1 1H4V7H1Z" c={ink} f="#fff" w={0.9} /><F c={ink} d="M3 2.5H5V0.5L8 4L5 7.5V5.5H3Z" /><Dot x={4.5} y={4} c={blue} /></svg></button>
                </LibraryRow>
                <Library>
                  <SwatchGrid>
                    {swatches.map(([top, left, right], i) => (
                      <Swatch key={i} $picked={i === picked} aria-label={`Color ${i + 1}`} onClick={() => setPicked(i)}>
                        <svg viewBox="0 0 32 32" aria-hidden="true">
                          <path d="M16 1L30 11L16 16L2 11Z" fill={top} />
                          <path d="M2 11L16 16V31L4 24Z" fill={left} />
                          <path d="M30 11L16 16V31L28 24Z" fill={right} />
                        </svg>
                      </Swatch>
                    ))}
                  </SwatchGrid>
                  <LibraryScroll><span>▴</span><i /></LibraryScroll>
                </Library>
              </Materials>
            </Panels>
            <TrayScroll><span>▴</span><i /><span>▾</span></TrayScroll>
          </TrayBody>
        </Tray>
      </Workspace>

      <StatusBar>
        <svg width="8" height="8" viewBox="0 0 8 8" aria-hidden="true"><circle cx="4" cy="4" r="3.5" fill="none" stroke="#aaa" strokeWidth="0.8" /><S d="M3 3C3 1 6 2 4 4V6" c="#888" w={0.8} /></svg>
        <svg width="8" height="8" viewBox="0 0 8 8" aria-hidden="true"><circle cx="4" cy="4" r="3.5" fill="none" stroke={ink} strokeWidth="0.9" /><S d="M4 2V6" c={ink} w={1.4} /></svg>
        <p>Click or drag to select objects. Shift = Add/Subtract. Ctrl = Add. Shift + Ctrl = Subtract.</p>
        <Measurements />
      </StatusBar>
    </Window>
  );
};

const GlobalStyle = createGlobalStyle`
  * {
    box-sizing: border-box;
  }

  body {
    margin: 0;
    overflow: hidden;
    font-family: Lato, "Noto Sans CJK KR", sans-serif;
    font-size: 7px;
    color: #2e323a;
  }

  h1, h2, p {
    margin: 0;
    font-size: inherit;
    font-weight: 400;
  }

  button {
    display: flex;
    align-items: center;
    justify-content: center;
    padding: 0;
    border: 0;
    background: none;
    color: inherit;
    font: inherit;
  }
`;

const Window = styled.div`
  display: flex;
  flex-direction: column;
  height: 100vh;
  background: #f0f0f6;
  overflow: hidden;
`;

const TitleBar = styled.header`
  display: flex;
  align-items: center;
  height: 9px;
  flex-shrink: 0;
  background: linear-gradient(90deg, #e9e9ee, #f4ece7 50%, #f0eeea 70%, #e7e9ec);

  h1 {
    margin-left: 3px;
    font-size: 6px;
    line-height: 8px;
    color: #1c1e22;
  }
`;

const WindowButtons = styled.div`
  display: flex;
  gap: 17px;
  margin-left: auto;
  padding-right: 8px;
`;

const MenuBar = styled.nav`
  display: flex;
  align-items: center;
  gap: 6px;
  height: 13px;
  flex-shrink: 0;
  padding-left: 4px;
  border-bottom: 1px solid #e2e2e8;
  background: #f3f3f7;
`;

const Toolbars = styled.div`
  flex-shrink: 0;
  padding-bottom: 1px;
`;

const ToolbarRow = styled.div`
  display: flex;
  height: 14px;
  border-bottom: 1px solid #e8e8ee;
`;

const Toolbar = styled.div`
  display: flex;
  align-items: center;
  justify-content: space-between;
  flex: 0 0 ${({ $width }) => $width}px;
  margin-left: ${({ $gap }) => $gap}px;
  background: #f4f4f9;
`;

const ToolButton = styled.button`
  width: 12px;
  height: 12px;
  border-radius: 2px;
  background: ${({ $pressed }) => ($pressed ? "#d5e9f6" : "none")};
  box-shadow: ${({ $pressed }) => ($pressed ? "0 0 0 1px #6ba4c8" : "none")};

  svg {
    width: 11px;
    height: 11px;
  }
`;

const Separator = styled.span`
  width: 1px;
  height: 7px;
  margin: 0 1px;
  background: #8f9299;
`;

const Caret = styled.button`
  width: 5px;
  height: 12px;

  &::after {
    content: "";
    border: 2px solid transparent;
    border-top-color: #777;
    border-bottom: 0;
  }
`;

const Workspace = styled.div`
  display: flex;
  flex: 1;
  min-height: 0;
`;

const Rail = styled.aside`
  display: flex;
  flex-direction: column;
  flex: 0 0 26px;
  padding-top: 5px;
`;

const RailGroup = styled.div`
  display: grid;
  grid-template-columns: 12px 12px;
  justify-content: center;
  padding-top: ${({ $divided }) => ($divided ? "3px" : 0)};
  border-top: ${({ $divided }) => ($divided ? "1px solid #85878c" : 0)};
`;

const Viewport = styled.main`
  display: flex;
  flex-direction: column;
  flex: 1;
  min-width: 0;
  border-bottom: 1px solid #73766f;
`;

const SceneBar = styled.div`
  display: flex;
  align-items: flex-end;
  height: 16px;
  flex-shrink: 0;
  border-left: 1px solid #666;
  background: #e2e2e9;
`;

const SearchButton = styled.button`
  flex: 0 0 35px;
  height: 16px;
  padding-right: 4px;
  border-right: 2px solid #d0d0d8;
  background: #f6f6fa;
`;

const SceneTab = styled.button`
  flex: ${({ $size }) => $size} 1 0;
  min-width: 0;
  height: 14px;
  border-right: 1px solid #888b96;
  border-top: 1px solid #c5c6d0;
  background: ${({ $active }) => ($active ? "#fff" : "#e0e0ea")};
  color: #4d515c;
  font-size: 6px;
  white-space: nowrap;
  overflow: hidden;
`;

const SceneScroll = styled.div`
  display: flex;
  gap: 1px;
  margin-left: 7px;

  button {
    width: 7px;
    height: 14px;
    background: #fff;
    font-size: 6px;
  }
`;

const Drawing = styled.svg`
  display: block;
  width: 100%;
  flex: 1;
  min-height: 0;
  background: #cbccc7;
`;

const CanvasText = styled.text`
  fill: ${({ $blue }) => ($blue ? "#1540f0" : "#4a4a4a")};
  font-size: 8px;
`;

const Tray = styled.aside`
  display: flex;
  flex-direction: column;
  flex: 0 0 210px;
  border-left: 3px solid #e0e0e6;
`;

const TrayTitle = styled.div`
  display: flex;
  align-items: center;
  gap: 4px;
  height: 15px;
  flex-shrink: 0;
  padding: 0 0 0 3px;
  background: #f3f3f7;

  h2 {
    flex: 1;
    font-weight: 700;
  }
`;

const TrayBody = styled.div`
  display: flex;
  flex: 1;
  min-height: 0;
`;

const Panels = styled.div`
  display: flex;
  flex-direction: column;
  flex: 1;
  min-width: 0;
  overflow: hidden;
  background: #f3f7fc;
`;

const Header = styled.div`
  display: flex;
  align-items: center;
  gap: 4px;
  height: 14px;
  flex-shrink: 0;
  padding-left: 4px;
  background: #dfe0e9;

  h2 {
    flex: 1;
    color: #555b68;
  }
`;

const CloseButton = styled.button`
  width: 10px;
  height: 11px;
  margin-right: 1px;
  border: 1px solid #c8c9d0;
  background: #fff;
`;

const EntityInfo = styled.section`
  flex: 0 0 118px;
  padding: 5px 5px 0;

  strong {
    display: block;
    padding-bottom: 3px;
    border-bottom: 2px solid #e5e8ee;
    font-weight: 700;
    line-height: 8px;
  }
`;

const Materials = styled.section`
  display: flex;
  flex-direction: column;
  flex: 1;
  min-height: 0;
  padding: 9px 5px 0;
`;

const Preview = styled.div`
  position: relative;
  display: flex;
  align-items: center;
  justify-content: center;
  flex-shrink: 0;
  height: 76px;
  margin: 0 19px;
  background: #454545;
`;

const Sparkle = styled.button`
  position: absolute;
  right: 7px;
  bottom: 7px;
  width: 16px;
  height: 16px;
  border-radius: 2px;
  background: #fff;
`;

const NameRow = styled.div`
  display: flex;
  align-items: center;
  gap: 4px;
  height: 24px;
  flex-shrink: 0;
  padding: 0 6px 4px 6px;
  border-bottom: 1px solid #dadde5;

  label {
    width: 18px;
  }

  input {
    flex: 1;
    min-width: 0;
    height: 12px;
    margin-right: 3px;
    padding: 0 1px;
    border: 1px solid #c6c9d0;
    border-radius: 2px;
    background: #fff;
    color: inherit;
    font: inherit;
  }
`;

const MaterialTabs = styled.div`
  display: flex;
  align-items: flex-end;
  gap: 6px;
  height: 20px;
  flex-shrink: 0;
  padding-right: 3px;

  button:nth-child(3) {
    margin-left: auto;
  }

  svg {
    margin-bottom: 3px;
  }
`;

const MaterialTab = styled.button`
  width: ${({ $raised }) => ($raised ? 22 : 29)}px;
  height: 13px;
  margin-right: -6px;
  border: 1px solid #e4e6ec;
  border-bottom: 0;
  background: ${({ $raised }) => ($raised ? "#fff" : "#f3f7fc")};
`;

const LibraryRow = styled.div`
  display: flex;
  align-items: center;
  gap: 4px;
  height: 15px;
  flex-shrink: 0;
  padding: 0 2px;

  select {
    flex: 1;
    min-width: 0;
    height: 12px;
    margin-left: -2px;
    padding: 0 1px;
    border: 1px solid #d0d3da;
    border-radius: 0;
    background: linear-gradient(#555, #555) right 5px center / 3px 1px no-repeat #fff;
    appearance: none;
    color: inherit;
    font: inherit;
  }
`;

const Library = styled.div`
  display: flex;
  flex: 1;
  min-height: 0;
  background: #fff;
  overflow: hidden;
`;

const SwatchGrid = styled.div`
  display: grid;
  grid-template-columns: repeat(5, 33px);
  grid-auto-rows: 33px;
  gap: 2px;
  flex: 1;
  padding: 2px 1px;
`;

const Swatch = styled.button`
  padding: 0;
  border: 1px solid #fff;
  background: #444;
  outline: ${({ $picked }) => ($picked ? "1px solid #1a7fcb" : "none")};

  svg {
    width: 100%;
    height: 100%;
  }
`;

const LibraryScroll = styled.div`
  display: flex;
  flex-direction: column;
  align-items: center;
  width: 8px;
  background: #ededf1;
  line-height: 6px;

  i {
    width: 7px;
    height: 14px;
    background: #fff;
    box-shadow: 0 0 0 1px #dcdce0;
  }
`;

const TrayScroll = styled.div`
  display: flex;
  flex-direction: column;
  align-items: center;
  width: 7px;
  border-left: 1px solid #cfd0d8;
  background: #eeeef2;
  line-height: 7px;

  i {
    width: 6px;
    height: 88px;
    margin-bottom: auto;
    border-bottom: 1px solid #d2d2d8;
    background: #fff;
  }
`;

const StatusBar = styled.footer`
  display: flex;
  align-items: center;
  gap: 6px;
  height: 10px;
  flex-shrink: 0;
  padding: 3px 0 0 3px;
  background: #ececf1;
  line-height: 8px;
  overflow: hidden;

  svg {
    flex-shrink: 0;
  }

  p {
    padding-left: 3px;
    border-left: 1px solid #d4d4da;
  }
`;

const Measurements = styled.output`
  width: 101px;
  height: 10px;
  margin-left: auto;
  border-left: 1px solid #c4c4ca;
`;

export default App;
